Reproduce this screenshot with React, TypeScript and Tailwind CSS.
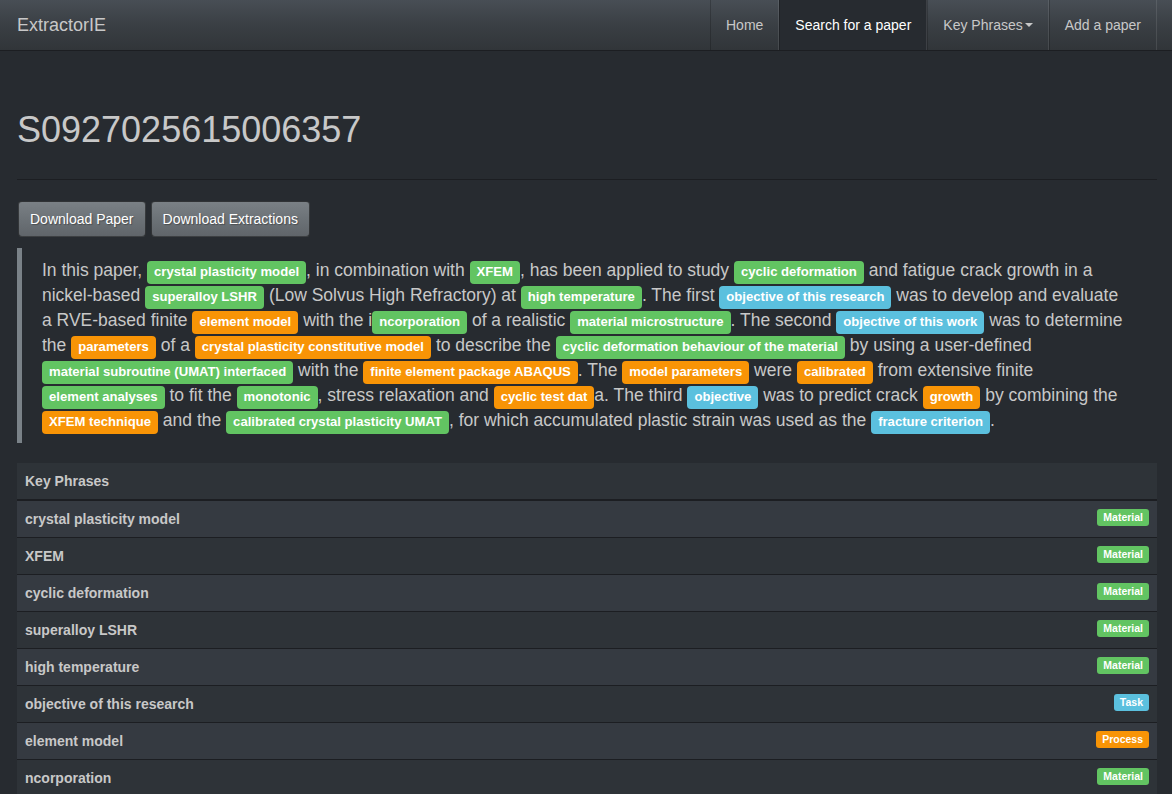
import React from "react";

type Kind = "m" | "p" | "t";

const labelColor: Record<Kind, string> = {
  m: "bg-[#62c462]",
  p: "bg-[#f89406]",
  t: "bg-[#5bc0de]",
};

const labelName: Record<Kind, string> = {
  m: "Material",
  p: "Process",
  t: "Task",
};

// abstract split into plain text and tagged phrases
const abstract: (string | [string, Kind])[] = [
  "In this paper, ",
  ["crystal plasticity model", "m"],
  ", in combination with ",
  ["XFEM", "m"],
  ", has been applied to study ",
  ["cyclic deformation", "m"],
  " and fatigue crack growth in a nickel-based ",
  ["superalloy LSHR", "m"],
  " (Low Solvus High Refractory) at ",
  ["high temperature", "m"],
  ". The first ",
  ["objective of this research", "t"],
  " was to develop and evaluate a RVE-based finite ",
  ["element model", "p"],
  " with the i",
  ["ncorporation", "m"],
  " of a realistic ",
  ["material microstructure", "m"],
  ". The second ",
  ["objective of this work", "t"],
  " was to determine the ",
  ["parameters", "p"],
  " of a ",
  ["crystal plasticity constitutive model", "p"],
  " to describe the ",
  ["cyclic deformation behaviour of the material", "m"],
  " by using a user-defined ",
  ["material subroutine (UMAT) interfaced", "m"],
  " with the ",
  ["finite element package ABAQUS", "p"],
  ". The ",
  ["model parameters", "p"],
  " were ",
  ["calibrated", "p"],
  " from extensive finite ",
  ["element analyses", "m"],
  " to fit the ",
  ["monotonic", "m"],
  ", stress relaxation and ",
  ["cyclic test dat", "p"],
  "a. The third ",
  ["objective", "t"],
  " was to predict crack ",
  ["growth", "p"],
  " by combining the ",
  ["XFEM technique", "p"],
  " and the ",
  ["calibrated crystal plasticity UMAT", "m"],
  ", for which accumulated plastic strain was used as the ",
  ["fracture criterion", "t"],
  ".",
];

const phrases = abstract.filter((a): a is [string, Kind] => Array.isArray(a));

function NavItem({ children, active }: { children: React.ReactNode; active?: boolean }) {
  return (
    <a
      className={
        "flex h-full items-center border-l border-r border-l-black/20 border-r-white/10 px-[15px] text-[14px] " +
        (active ? "bg-[#272b30] text-white" : "text-[#c8c8c8]")
      }
    >
      {children}
    </a>
  );
}

export default function App() {
  return (
    <div className="min-h-screen bg-[#272b30] font-['Liberation_Sans',Arial,sans-serif] text-[14px] text-[#c8c8c8]">
      <nav className="h-[51px] border-b border-[#1c1e22] bg-gradient-to-b from-[#484e55] via-[#3a3f44] to-[#313539]">
        <div className="flex h-full items-center justify-between pl-[17px] pr-[15px]">
          <span className="text-[18px] text-[#c8c8c8]">ExtractorIE</span>
          <div className="flex h-full">
            <NavItem>Home</NavItem>
            <NavItem active>Search for a paper</NavItem>
            <NavItem>
              Key Phrases
              <span className="ml-[2px] inline-block h-0 w-0 border-x-[4px] border-t-[4px] border-x-transparent border-t-[#c8c8c8]" />
            </NavItem>
            <NavItem>Add a paper</NavItem>
          </div>
        </div>
      </nav>

      <main className="pl-[17px] pr-[15px]">
        <div className="border-b border-[#1c1e22] pt-[59px] pb-[29px]">
          <h1 className="text-[36px] leading-[40px] text-[#c8c8c8]">S0927025615006357</h1>
        </div>

        <div className="mt-[21px] flex gap-[5px] pl-[1px]">
          <button className="h-[36px] rounded-[4px] border border-black/50 bg-gradient-to-b from-[#7a8085] via-[#6c7277] to-[#60656a] px-[11px] text-[14px] text-white [text-shadow:1px_1px_1px_rgba(0,0,0,0.3)]">
            Download Paper
          </button>
          <button className="h-[36px] rounded-[4px] border border-black/50 bg-gradient-to-b from-[#7a8085] via-[#6c7277] to-[#60656a] px-[11px] text-[14px] text-white [text-shadow:1px_1px_1px_rgba(0,0,0,0.3)]">
            Download Extractions
          </button>
        </div>

        <blockquote className="mt-[11px] border-l-[5px] border-[#7a8288] py-[10px] pl-[20px] pr-[29px] text-[17.5px] leading-[25px] text-[#c8c8c8]">
          {abstract.map((seg, i) =>
            typeof seg === "string" ? (
              <React.Fragment key={i}>{seg}</React.Fragment>
            ) : (
              <span
                key={i}
                className={
                  "whitespace-nowrap rounded-[4px] px-[7px] pt-[3px] pb-[5px] align-baseline text-[13.125px] font-bold leading-none text-white " +
                  labelColor[seg[1]]
                }
              >
                {seg[0]}
              </span>
            )
          )}
        </blockquote>

        <table className="mt-[20px] w-full border-collapse text-[14px] font-bold text-[#c8c8c8]">
          <thead>
            <tr className="bg-[#2e3338]">
              <th className="border-b-2 border-[#1c1e22] p-[8px] text-left leading-[20px]">Key Phrases</th>
              <th className="border-b-2 border-[#1c1e22] p-[8px]"></th>
            </tr>
          </thead>
          <tbody>
            {phrases.map(([text, kind], i) => (
              <tr key={i} className={i % 2 === 0 ? "bg-[#353a41]" : "bg-[#2e3338]"}>
                <td className="border-t border-[#1c1e22] p-[8px] leading-[20px]">{text}</td>
                <td className="border-t border-[#1c1e22] p-[8px] text-right align-top leading-[20px]">
                  <span
                    className={
                      "relative -top-[3px] rounded-[3px] px-[6px] pt-[2px] pb-[3px] text-[10.5px] font-bold leading-none text-white " +
                      labelColor[kind]
                    }
                  >
                    {labelName[kind]}
                  </span>
                </td>
              </tr>
            ))}
          </tbody>
        </table>
      </main>
    </div>
  );
}
